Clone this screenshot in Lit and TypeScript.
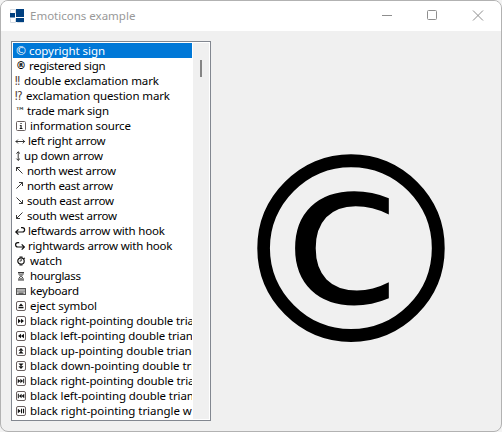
import { LitElement, html, svg, css, nothing } from "lit";
import { customElement, state } from "lit/decorators.js";

type Row = { icon: string; w: number; label: string; width: number; look?: string };

const rows: Row[] = [
  { icon: "©", w: 14.4, label: "copyright sign", width: 76 },
  { icon: "®", w: 14.4, label: "registered sign", width: 76.5, look: "heavy" },
  { icon: "‼", w: 9.4, label: "double exclamation mark", width: 135, look: "marks" },
  { icon: "⁉", w: 11.4, label: "exclamation question mark", width: 144, look: "marks" },
  { icon: "™", w: 12, label: "trade mark sign", width: 82, look: "small" },
  { icon: "info", w: 15, label: "information source", width: 101 },
  { icon: "lr", w: 13.2, label: "left right arrow", width: 77.5 },
  { icon: "ud", w: 9.3, label: "up down arrow", width: 79 },
  { icon: "nw", w: 12.3, label: "north west arrow", width: 89 },
  { icon: "ne", w: 12.3, label: "north east arrow", width: 86 },
  { icon: "se", w: 12.3, label: "south east arrow", width: 87 },
  { icon: "sw", w: 12.3, label: "south west arrow", width: 90 },
  { icon: "hookl", w: 13.2, label: "leftwards arrow with hook", width: 137 },
  { icon: "hookr", w: 13.2, label: "rightwards arrow with hook", width: 144.5 },
  { icon: "watch", w: 15, label: "watch", width: 32 },
  { icon: "hourglass", w: 15, label: "hourglass", width: 51 },
  { icon: "keyboard", w: 15, label: "keyboard", width: 49 },
  { icon: "eject", w: 15, label: "eject symbol", width: 67 },
  { icon: "ff", w: 15, label: "black right-pointing double triangle", width: 187 },
  { icon: "rew", w: 15, label: "black left-pointing double triangle", width: 179 },
  { icon: "up", w: 15, label: "black up-pointing double triangle", width: 178 },
  { icon: "down", w: 15, label: "black down-pointing double triangle", width: 194 },
  { icon: "next", w: 15, label: "black right-pointing double triangle with vertical bar", width: 275 },
  { icon: "prev", w: 15, label: "black left-pointing double triangle with vertical bar", width: 268 },
  { icon: "playpause", w: 15, label: "black right-pointing triangle with double vertical bar", width: 279 },
];

const line = (d: string, cls = "thin") => svg`<path class=${cls} d=${d}></path>`;
const boxed = (d: string) => svg`
  <rect class="key" x="1.5" y="3.5" width="9" height="9" rx="1.5"></rect>
  <path transform="translate(0 1)" d=${d}></path>`;

const icons: Record<string, unknown> = {
  info: svg`<rect class="key" x="1.5" y="3.5" width="9" height="9" rx="1"></rect><path d="M5.5 5h1.1v1.1H5.5zM4.8 7h1.8v3h.8v.9H4.7V10h.8V7.8h-.7z"></path>`,
  lr: line("M.8 8.5H9.8M2.9 6.6L1 8.5l1.9 1.9M7.7 6.6l1.9 1.9-1.9 1.9"),
  ud: line("M3.2 3.8V12.4M1.4 5.6L3.2 3.8 5 5.6M1.4 10.6l1.8 1.8L5 10.6"),
  nw: line("M1.5 4.5l6 6M1.5 8V4.5H5"),
  ne: line("M1.5 10.5l6-6M4 4.5h3.5V8"),
  se: line("M1.5 4.5l6 6M4 10.5h3.5V7"),
  sw: line("M7.5 4.5l-6 6M1.5 7v3.5H5"),
  hookl: line("M.8 9H7.4a2.2 2.2 0 0 0 0-4.4H6M3.5 6.3L.8 9l2.7 2.7", "mid"),
  hookr: line("M9.4 9H2.8a2.2 2.2 0 0 1 0-4.4h1.4M6.7 6.3L9.4 9l-2.7 2.7", "mid"),
  watch: svg`<circle class="mid" cx="6" cy="8" r="3.2"></circle><path class="mid" d="M4.5 4h3M4.5 12h3M9 4.8l.8.8"></path><path class="thin" d="M6.2 6v2H4.6"></path>`,
  hourglass: svg`<path class="thin" d="M3 4.5h6M3 12h6M4 5v1.3l1.6 1.9L4 10.2v1.3M8 5v1.3L6.4 8.2 8 10.2v1.3"></path><path class="dim" d="M4.4 5.5h3.2L6 7.6zM4.2 11.5l1.8-2 1.8 2z"></path>`,
  keyboard: svg`<rect class="keys" x="1.5" y="5.5" width="9" height="6"></rect><path class="grey" d="M2 7h8M2 8.6h8"></path><path class="thin" d="M3.5 10.2h5"></path>`,
  eject: boxed("M6 4.5l2.5 2.8h-5zM3.5 8h5v1.2h-5z"),
  ff: boxed("M3 4.7L6 7 3 9.3zM6 4.7L9 7 6 9.3z"),
  rew: boxed("M6 4.7L3 7l3 2.3zM9 4.7L6 7l3 2.3z"),
  up: boxed("M6 4l2.5 2.8h-5zM6 6.8l2.5 2.8h-5z"),
  down: boxed("M6 7.2L3.5 4.4h5zM6 10L3.5 7.2h5z"),
  next: boxed("M2.7 4.7L5.4 7 2.7 9.3zM5.4 4.7L8.1 7 5.4 9.3zM8.2 4.7h1v4.6h-1z"),
  prev: boxed("M6.6 4.7L3.9 7l2.7 2.3zM9.3 4.7L6.6 7l2.7 2.3zM2.8 4.7h1v4.6h-1z"),
  playpause: boxed("M2.8 4.7L5.8 7l-3 2.3zM6 4.7h1.1v4.6H6zM8 4.7h1.1v4.6H8z"),
};

@customElement("app-root")
class AppRoot extends LitElement {
  @state() private selected = 0;

  static styles = css`
    :host { display: block; width: 502px; height: 432px; background: #f3f3f3; }
    * { box-sizing: border-box; }
    .window {
      display: flex; flex-direction: column; width: 502px; height: 432px;
      border: 1px solid #b2b2b2; border-radius: 8px; background: #f0f0f0; overflow: hidden;
      font-family: "Noto Sans", sans-serif; font-size: 11.5px; color: #000;
    }
    .bar { display: flex; height: 30px; flex: none; background: #fff; align-items: center; padding-left: 9px; }
    .logo { width: 14px; height: 14px; flex: none; }
    .title { flex: 1; margin-left: 6px; color: #999; line-height: 30px; }
    .controls { display: flex; }
    .controls svg { width: 46px; height: 30px; fill: none; stroke: #8e8e8e; }
    .body { flex: 1; display: flex; padding: 10px 0 0 10px; min-height: 0; }
    .list {
      width: 200px; height: 380px; border: 1px solid #828790; background: #fff;
      padding: 1px; display: flex; justify-content: space-between; flex: none;
    }
    .items { width: 179px; overflow: hidden; }
    .row { display: flex; height: 15px; line-height: 15px; padding-left: 2px; white-space: pre; }
    .row.on { background: #0078d7; color: #fff; }
    .icon { flex: none; height: 15px; overflow: visible; }
    .icon svg { display: block; width: 12px; height: 15px; overflow: visible; fill: #111; }
    .sign { font-family: "DejaVu Sans", sans-serif; font-size: 12px; line-height: 17px; }
    .heavy { font-size: 10px; line-height: 15px; font-weight: bold; padding-left: 1px; }
    .marks { font-family: "DejaVu Sans Condensed", "DejaVu Sans", sans-serif; font-size: 11.5px; color: #4a3428; }
    .small { font-size: 10.5px; line-height: 17px; }
    .label { flex: none; display: block; height: 15px; overflow: visible; fill: currentColor; }
    .thin { fill: none; stroke: #222; stroke-width: 0.9; }
    .mid { fill: none; stroke: #111; stroke-width: 1.2; }
    .grey { fill: none; stroke: #888; stroke-width: 0.8; }
    .dim { fill: #666; }
    .keys { fill: #ccc; stroke: #555; stroke-width: 1; }
    .key { fill: #fff; stroke: #6a6060; stroke-width: 1; }
    .track { width: 16px; height: 376px; background: #f0f0f0; padding: 17px 0 0 7px; }
    .thumb { width: 2px; height: 17px; background: #858585; }
    .preview { flex: 1; display: flex; align-items: center; justify-content: center; padding: 34px 10px 0 0; }
    .big { font-family: "DejaVu Sans", sans-serif; font-size: 259px; line-height: 300px; }
  `;

  private icon(r: Row) {
    return icons[r.icon] ? html`<svg viewBox="0 0 12 15">${icons[r.icon]}</svg>` : r.icon;
  }

  render() {
    const current = rows[this.selected];
    return html`
      <div class="window">
        <div class="bar">
          <svg class="logo" viewBox="0 0 14 14">
            <path d="M.5.5h5v4h-5zM.5 9.5v4h5v-4M7.5 9.5h6v4h-6z" fill="#fff" stroke="#d5dce4"></path>
            <path d="M6 0h8v8H6zM0 4h5v4.5H0zM6 9h8v4H6z" fill="#004080"></path>
          </svg>
          <span class="title">Emoticons example</span>
          <div class="controls">
            <svg viewBox="0 0 46 30"><path d="M19 14.5h10"></path></svg>
            <svg viewBox="0 0 46 30"><rect x="18.5" y="9.5" width="9" height="9" rx="1"></rect></svg>
            <svg viewBox="0 0 46 30"><path d="M18 9.5l10 10M28 9.5l-10 10"></path></svg>
          </div>
        </div>
        <div class="body">
          <div class="list">
            <div class="items">
              ${rows.map((r, i) => html`
                <div class="row ${i === this.selected ? "on" : ""}" @click=${() => (this.selected = i)}>
                  <span class="icon sign ${r.look ?? ""}" style="width:${r.w}px">${this.icon(r)}</span><svg class="label" width=${r.width} height="15"><text x="0" y="12" textLength=${r.width}>${r.label}</text></svg>
                </div>`)}
            </div>
            <div class="track"><div class="thumb"></div></div>
          </div>
          <div class="preview">${current ? html`<span class="big">${this.icon(current)}</span>` : nothing}</div>
        </div>
      </div>`;
  }
}
